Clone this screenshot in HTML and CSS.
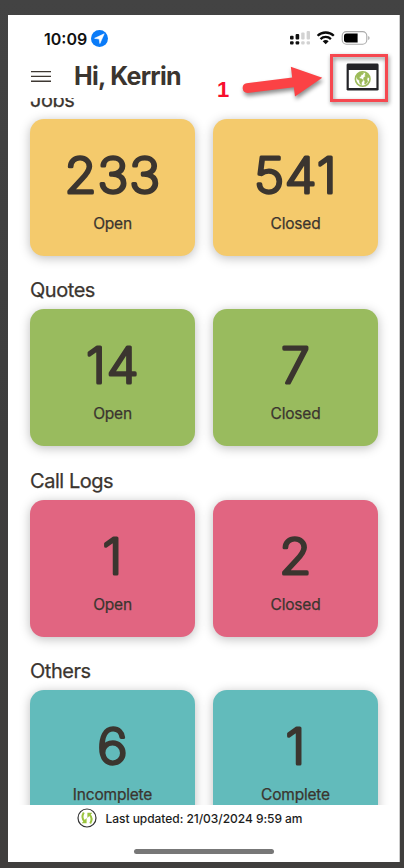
FILE: index.html
```html
<!DOCTYPE html>
<html lang="en">
<head>
<meta charset="utf-8">
<title>Dashboard</title>
<link rel="stylesheet" href="styles.css">
</head>
<body>
<div class="phone">
  <div class="status">
    <span class="time">10:09</span>
    <svg class="loc" width="17" height="17" viewBox="0 0 17 17"><circle cx="8.5" cy="8.5" r="8.5" fill="#0a7bf8"/><path d="M13.2 3.8 3.6 8.3l4.6.7.7 4.5z" fill="#fff" stroke="#fff" stroke-width=".6" stroke-linejoin="round"/></svg>
    <svg class="system" width="82" height="18" viewBox="0 0 82 18">
      <g fill="#111"><rect x="1" y="6.800" width="3.600" height="3.800" rx="1"/><rect x="6.600" y="5" width="3.600" height="5.600" rx="1"/><rect x="1" y="12.200" width="3.600" height="3.400" rx="1"/><rect x="6.600" y="12.200" width="3.600" height="3.400" rx="1"/></g>
      <g fill="#d2d2d2"><rect x="12.200" y="3.600" width="3.400" height="7" rx="1"/><rect x="17.600" y="2" width="3.400" height="8.600" rx="1"/><rect x="12.200" y="12.200" width="3.400" height="3.400" rx="1"/><rect x="17.600" y="12.200" width="3.400" height="3.400" rx="1"/></g>
      <g fill="none" stroke="#0a0a0a" stroke-width="2.300"><path d="M28.600 6.800a11.600 11.600 0 0 1 16.200 0"/><path d="M31.500 10.100a7.400 7.400 0 0 1 10.400 0"/></g>
      <path d="M33.700 12.300a4.400 4.400 0 0 1 6 0l-3 3z" fill="#0a0a0a"/>
      <rect x="53.200" y="2.600" width="24.600" height="12.600" rx="4.200" fill="#fff" stroke="#aaa" stroke-width="1.100"/>
      <path d="M79.300 7v4q1.200-.6 1.200-2t-1.200-2z" fill="#999"/>
      <path d="M57.600 4.400H68.600V13.400H57.600Q55 13.400 55 10.800V7Q55 4.400 57.600 4.400z" fill="#000"/>
    </svg>
  </div>
  <header class="header">
    <svg class="menu" width="20" height="13" viewBox="0 0 20 13"><path d="M0 1.600h20M0 6.400h20M0 11.200h20" stroke="#3e3832" stroke-width="1.400"/></svg>
    <h1>Hi, Kerrin</h1>
    <svg class="web" width="33" height="28" viewBox="0 0 33 28">
      <rect x=".6" y=".6" width="32" height="27" rx="1.400" fill="#242428"/><rect x="2.800" y="7" width="27.600" height="18" fill="#fff"/>
      <circle cx="16.700" cy="16" r="7.300" fill="#fff" stroke="#9cbb59" stroke-width="1.600"/>
      <path d="M10.200 13.200q1.800-3.600 5.400-4.300l2 .9-.8 1.600-1.600.4-.5 1.800-1.500.5.7 1.400 2.100.4 1.100 1.400-1.500 2.200-.3 2.700-1.700-2.500-.2-2.300-2.200-1.500zM19.700 9.700l2.800 2.600.7 2.200-1.800.1-.4 2.100.9 1.800-2.600 3-.7-.6.2-2.700-1.300-1.600.3-2.100 1.600-.9-.4-1.400z" fill="#9cbb59" stroke="#9cbb59" stroke-width=".5"/>
    </svg>
  </header>
  <main class="content">
    <section>
      <h2>Jobs</h2>
      <div class="cards yellow">
        <div class="card"><svg class="num" viewBox="0 0 165 50"><text x="0" y="43">233</text></svg><p>Open</p></div>
        <div class="card"><svg class="num" viewBox="0 0 165 50"><text x="0" y="43">541</text></svg><p>Closed</p></div>
      </div>
    </section>
    <section>
      <h2>Quotes</h2>
      <div class="cards green">
        <div class="card"><svg class="num" viewBox="0 0 165 50"><text x="0" y="43">14</text></svg><p>Open</p></div>
        <div class="card"><svg class="num" viewBox="0 0 165 50"><text x="0" y="43">7</text></svg><p>Closed</p></div>
      </div>
    </section>
    <section>
      <h2>Call Logs</h2>
      <div class="cards pink">
        <div class="card"><svg class="num" viewBox="0 0 165 50"><text x="0" y="43">1</text></svg><p>Open</p></div>
        <div class="card"><svg class="num" viewBox="0 0 165 50"><text x="0" y="43">2</text></svg><p>Closed</p></div>
      </div>
    </section>
    <section>
      <h2>Others</h2>
      <div class="cards teal">
        <div class="card"><svg class="num" viewBox="0 0 165 50"><text x="0" y="43">6</text></svg><p>Incomplete</p></div>
        <div class="card"><svg class="num" viewBox="0 0 165 50"><text x="0" y="43">1</text></svg><p>Complete</p></div>
      </div>
    </section>
  </main>
  <footer class="footer">
    <div class="updated">
      <svg width="20" height="20" viewBox="0 0 20 20"><circle cx="10" cy="10" r="9" fill="#fff" stroke="#333" stroke-width="1.200"/><g fill="none" stroke="#9bc43f" stroke-width="2"><path d="M6.800 4.600Q3.800 9.600 7.400 13.200"/><path d="M13.200 15.400Q16.200 10.400 12.600 6.800"/></g><path d="M4.600 15.200h5V10zM15.400 4.800h-5V10z" fill="#9bc43f"/></svg>
      <span>Last updated: 21/03/2024 9:59 am</span>
    </div>
    <div class="home"></div>
  </footer>
</div>
<div class="callout">
  <span class="step">1</span>
  <svg class="arrow" width="90" height="44" viewBox="0 0 90 44"><path d="M7.600 22.300 53.200 16.500 51.800 5.800 83.300 16.700 56 35.500 54.800 26.200 8.600 32A4.900 4.900 0 0 1 7.600 22.300z" fill="#fb4245"/></svg>
  <div class="box"></div>
</div>
</body>
</html>
```
FILE: styles.css
```css
* { box-sizing: border-box; }
body {
  margin: 0;
  width: 404px;
  height: 868px;
  padding: 15px 4px 6px 8px;
  overflow: hidden;
  position: relative;
  background: linear-gradient(#434343, #3d3d3d 50%, #403e3d);
  font-family: Inter, "Liberation Sans", sans-serif;
  color: #3b352f;
}
h1, h2, p { margin: 0; }
.phone {
  height: 847px;
  display: flex;
  flex-direction: column;
  background: #fff;
  border-right: 1px solid #ccc;
}
.status {
  height: 46px;
  padding: 1px 28px 0 36px;
  display: flex;
  align-items: center;
  flex: none;
}
.time { font-size: 16px; font-weight: 600; letter-spacing: 0; color: #111; width: 47px; }
.system { margin: -2px 0 0 auto; }
.header {
  height: 37px;
  flex: none;
  display: flex;
  align-items: center;
  padding: 0 20px 7px 23px;
}
.menu { margin-top: 1px; }
h1 { margin-left: 23px; font-size: 25px; line-height: 30px; font-weight: 700; letter-spacing: -.7px; }
.web { margin-left: auto; margin-top: 1px; }
.content { height: 707px; flex: none; overflow: hidden; padding: 0 21px 0 22px; }
section { height: 190.500px; position: relative; top: -10.900px; }
h2 { font-size: 20px; line-height: 24px; font-weight: 400; letter-spacing: -.45px; margin-bottom: 7.600px; padding-top: .8px; height: 24px; -webkit-text-stroke: .25px; }
.cards { display: flex; gap: 18px; }
.card {
  width: 165px;
  height: 137px;
  border-radius: 14px;
  box-shadow: 0 2px 11px rgba(0, 0, 0, .26);
  text-align: center;
  padding-top: 31px;
  flex: none;
}
.yellow .card { background: #f4ca6c; }
.green .card { background: #99bb5e; }
.pink .card { background: #e16581; }
.teal .card { background: #62bbbb; }
.num { display: block; width: 165px; height: 50px; overflow: visible; }
.num text {
  font-size: 49.500px;
  font-weight: 200;
  letter-spacing: .8px;
  text-anchor: middle;
  transform: translateX(82.700px) scaleX(1.050);
  fill: #3b352f;
  stroke: #3b352f;
  stroke-width: 3.200px;
  stroke-linejoin: round;
}
.card p { font-size: 15.500px; line-height: 20px; margin-top: 14px; letter-spacing: -.2px; -webkit-text-stroke: .25px; }
.footer { flex: 1; display: flex; flex-direction: column; align-items: center; }
.updated {
  height: 26px;
  width: 100%;
  padding-left: 69px;
  display: flex;
  align-items: center;
  gap: 8.500px;
  font-size: 12px;
  font-weight: 500;
  color: #1c1c1c;
}
.updated span { letter-spacing: -.04px; }
.home { width: 140px; height: 5px; border-radius: 3px; background: #777; margin: 18px 0 0 1px; }
.callout { position: absolute; left: 0; top: 0; width: 404px; height: 110px; }
.step { position: absolute; left: 217px; top: 78px; font: 700 22px/24px "Liberation Sans", sans-serif; color: #f80f2c; }
.arrow { position: absolute; left: 239px; top: 61px; filter: drop-shadow(1px 3px 2px rgba(0, 0, 0, .45)); overflow: visible; }
.box {
  position: absolute;
  left: 330px;
  top: 54px;
  width: 58px;
  height: 48px;
  border: 3px solid #f64850;
  filter: drop-shadow(1px 2px 2px rgba(0, 0, 0, .45));
}
```
